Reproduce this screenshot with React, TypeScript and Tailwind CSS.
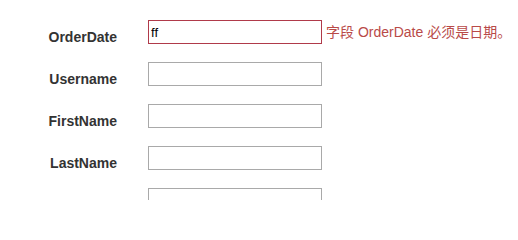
const fields = [
  { label: "OrderDate", value: "ff", error: "字段 OrderDate 必须是日期。" },
  { label: "Username", value: "" },
  { label: "FirstName", value: "" },
  { label: "LastName", value: "" },
  { label: "", value: "" },
]

export default function App() {
  return (
    <div className="w-[518px] h-[200px] overflow-hidden bg-white pt-5 font-['Liberation_Sans','Noto_Sans_CJK_SC',sans-serif]">
      {fields.map((field, index) => (
        <div key={index} className="flex items-start h-[24px] mb-[18px]">
          <label className="w-[117px] pt-[7px] text-right text-[14px] leading-5 font-bold text-[#333]">
            {field.label}
          </label>
          <input
            readOnly
            value={field.value}
            className={
              field.error
                ? "ml-[31px] w-[174px] h-[24px] px-[2px] border border-[#b03a4a] bg-white text-[13px] text-black outline-none"
                : "ml-[31px] w-[174px] h-[24px] px-[2px] border border-[#a9a9a9] bg-white text-[13px] text-black outline-none"
            }
          />
          {field.error && (
            <span className="ml-[4px] pt-[2px] text-[14px] leading-5 text-[#b94a48] whitespace-nowrap">
              {field.error}
            </span>
          )}
        </div>
      ))}
    </div>
  )
}
